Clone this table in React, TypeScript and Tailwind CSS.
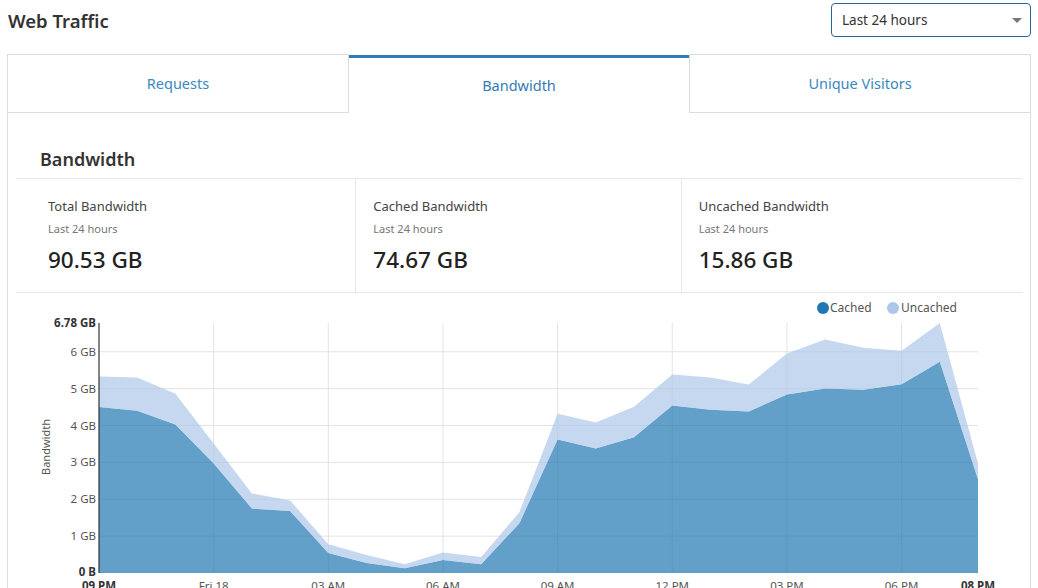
const cached = [4.5, 4.4, 4.03, 2.97, 1.75, 1.68, 0.54, 0.27, 0.13, 0.35, 0.24, 1.35, 3.62, 3.38, 3.68, 4.54, 4.43, 4.38, 4.84, 5.0, 4.97, 5.12, 5.73, 2.54];
const total = [5.33, 5.3, 4.86, 3.51, 2.16, 1.97, 0.78, 0.49, 0.24, 0.56, 0.43, 1.65, 4.32, 4.08, 4.51, 5.38, 5.3, 5.11, 5.95, 6.33, 6.11, 6.03, 6.78, 2.97];

const X0 = 99;
const X1 = 978;
const Y0 = 573;
const MAX = 6.78;
const PX_PER_GB = 250 / MAX;

const xAt = (i: number) => X0 + (i * (X1 - X0)) / 23;
const yAt = (v: number) => Y0 - v * PX_PER_GB;

const line = (vals: number[]) => vals.map((v, i) => `${xAt(i).toFixed(1)},${yAt(v).toFixed(1)}`);

const cachedPath = `M${X0},${Y0} L${line(cached).join(" L")} L${X1},${Y0} Z`;
const uncachedPath = `M${line(cached).join(" L")} L${line(total).reverse().join(" L")} Z`;

const yTicks = [1, 2, 3, 4, 5, 6];
const xTicks = [
  { h: 0, label: "09 PM", bold: true },
  { h: 3, label: "Fri 18" },
  { h: 6, label: "03 AM" },
  { h: 9, label: "06 AM" },
  { h: 12, label: "09 AM" },
  { h: 15, label: "12 PM" },
  { h: 18, label: "03 PM" },
  { h: 21, label: "06 PM" },
  { h: 23, label: "08 PM", bold: true },
];

const stats = [
  { label: "Total Bandwidth", value: "90.53 GB" },
  { label: "Cached Bandwidth", value: "74.67 GB" },
  { label: "Uncached Bandwidth", value: "15.86 GB" },
];

const tabs = ["Requests", "Bandwidth", "Unique Visitors"];

function Chart() {
  return (
    <svg width={1005} height={300} viewBox="16 293 1005 300" className="block" fontFamily="'Noto Sans', sans-serif">
      {/* grid */}
      {yTicks.map((t) => (
        <line key={t} x1={X0} x2={X1} y1={yAt(t)} y2={yAt(t)} stroke="#e3e3e3" strokeWidth={1} />
      ))}
      {xTicks.slice(1, -1).map((t) => (
        <line key={t.h} x1={xAt(t.h)} x2={xAt(t.h)} y1={yAt(MAX)} y2={Y0} stroke="#e3e3e3" strokeWidth={1} />
      ))}

      <path d={cachedPath} fill="#1f77b4" fillOpacity={0.7} />
      <path d={uncachedPath} fill="#aec7e8" fillOpacity={0.7} />

      {/* y axis */}
      <line x1={X0} x2={X0} y1={yAt(MAX)} y2={Y0} stroke="#333" strokeWidth={1.2} />
      <text x={96} y={yAt(MAX) + 4} textAnchor="end" fontSize={11.5} fontWeight={700} fill="#333">
        6.78 GB
      </text>
      {yTicks.map((t) => (
        <text key={t} x={96} y={yAt(t) + 4} textAnchor="end" fontSize={11.5} fill="#555">
          {t} GB
        </text>
      ))}
      <text x={96} y={Y0 + 3} textAnchor="end" fontSize={11.5} fontWeight={700} fill="#333">
        0 B
      </text>
      <text x={50} y={447} textAnchor="middle" fontSize={11} fill="#555" transform="rotate(-90 50 447)">
        Bandwidth
      </text>

      {/* x axis */}
      {xTicks.map((t) => (
        <text
          key={t.h}
          x={xAt(t.h)}
          y={590}
          textAnchor="middle"
          fontSize={11.5}
          fontWeight={t.bold ? 700 : 400}
          fill={t.bold ? "#333" : "#555"}
        >
          {t.label}
        </text>
      ))}

      {/* legend */}
      <circle cx={823} cy={308} r={6} fill="#1f77b4" />
      <text x={830} y={312} fontSize={12} fill="#555">
        Cached
      </text>
      <circle cx={893} cy={308} r={6} fill="#aec7e8" />
      <text x={901} y={312} fontSize={12} fill="#555">
        Uncached
      </text>
    </svg>
  );
}

export default function App() {
  return (
    <div className="h-[588px] overflow-hidden bg-white px-[7px] pt-[3px] font-['Noto_Sans',sans-serif]">
      <div className="flex h-[34px] items-center justify-between">
        <h1 className="pl-px pt-[2px] text-[18.5px] font-semibold text-[#333]">Web Traffic</h1>
        <div className="flex h-[34px] w-[200px] items-center justify-between rounded-[4px] border border-[#2a6496] pl-[10px] pr-2 text-[13.5px] text-[#333]">
          <span>Last 24 hours</span>
          <span className="h-0 w-0 border-x-[5px] border-t-[5px] border-x-transparent border-t-[#777]" />
        </div>
      </div>

      <div className="mt-[17px] border-x border-b border-[#ddd]">
        <div className="flex h-[59px]">
          {tabs.map((t, i) =>
            i === 1 ? (
              <div key={t} className="mt-px flex flex-1 items-center justify-center border-t-[3px] border-[#2f7cb8] text-[14.5px] text-[#337ab7]">
                {t}
              </div>
            ) : (
              <div
                key={t}
                className={`flex flex-1 items-center justify-center border-y border-[#ddd] text-[14.5px] text-[#3a88c2] ${
                  i === 0 ? "border-r" : "border-l"
                }`}
              >
                {t}
              </div>
            )
          )}
        </div>

        <div className="p-2">
          <h2 className="pl-6 pt-[26px] pb-[7px] text-[18px] leading-6 font-semibold text-[#333]">Bandwidth</h2>

          <div className="grid grid-cols-3 border-y border-[#e8e8e8] px-[15px]">
            {stats.map((s, i) => (
              <div key={s.label} className={`px-[17px] pt-[18px] pb-[17px] ${i < 2 ? "border-r border-[#e8e8e8]" : ""}`}>
                <div className="text-[13px] leading-[18px] text-[#444]">{s.label}</div>
                <div className="mt-[6px] text-[11px] leading-4 text-[#777]">Last 24 hours</div>
                <div className="mt-[8px] text-[22.5px] leading-[30px] font-medium text-[#222]">{s.value}</div>
              </div>
            ))}
          </div>

          <Chart />
        </div>
      </div>
    </div>
  );
}
